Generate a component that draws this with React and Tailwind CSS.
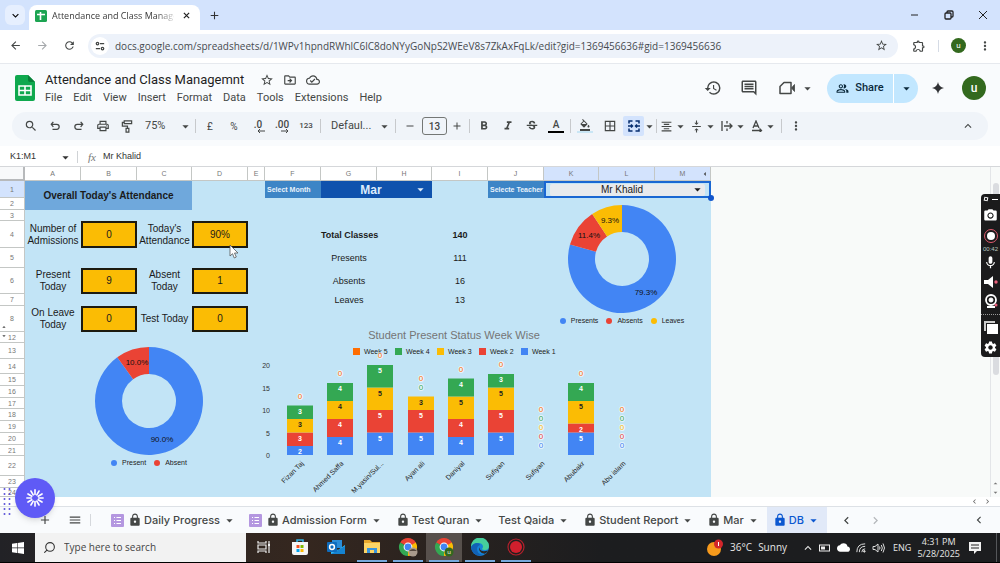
import React from 'react';
import {
  MdAdd, MdArrowBack, MdArrowDropDown, MdArrowDropUp, MdArrowForward, MdArrowLeft, MdBorderAll,
  MdChevronLeft, MdChevronRight, MdCloud, MdExpandLess, MdExpandMore, MdFormatAlignCenter,
  MdFormatBold, MdFormatColorFill, MdFormatItalic, MdHistory, MdLock, MdMenu, MdMic, MdMoreVert,
  MdOutlineCloudDone, MdOutlineComment, MdOutlineDriveFileMove, MdOutlineExtension,
  MdOutlinePeopleAlt, MdOutlinePrint, MdPhotoCamera, MdRefresh, MdRemove, MdSearch, MdSettings,
  MdStarBorder, MdStrikethroughS, MdVerticalAlignCenter,
} from 'react-icons/md';
import { Search } from 'lucide-react';

const BLUE = '#4285f4';
const RED = '#ea4335';
const YELLOW = '#fbbc04';
const GREEN = '#34a853';
const ORANGE = '#ff6d01';

const menus = ['File', 'Edit', 'View', 'Insert', 'Format', 'Data', 'Tools', 'Extensions', 'Help'];

const columns = [
  ['A', 'w-[56px]'], ['B', 'w-[56px]'], ['C', 'w-[55px]'], ['D', 'w-[56px]'], ['E', 'w-[17px]'],
  ['F', 'w-[56px]'], ['G', 'w-[56px]'], ['H', 'w-[55px]'], ['I', 'w-[56px]'], ['J', 'w-[56px]'],
  ['K', 'w-[55px]'], ['L', 'w-[56px]'], ['M', 'w-[56px]'],
];

const label = (text) => ({ text, cls: 'text-[10px] leading-[12px]' });
const box = (text) => ({ text, cls: 'border-2 border-[#1c1a10] bg-[#fbbc04] text-[10px] leading-[12px]' });
const value = (text) => ({ text, cls: 'text-[9px] leading-[12px]' });
const bold = (text) => ({ text, cls: 'whitespace-nowrap text-[9px] leading-[12px] font-bold' });
const gap = (span) => ({ text: '', span, cls: '' });

const rows = [
  { n: 2, h: 'h-[12px]', cells: [gap(10)] },
  { n: 3, h: 'h-[11px]', cells: [gap(13)] },
  {
    n: 4, h: 'h-[27px]',
    cells: [label('Number of Admissions'), box('0'), label("Today's Attendance"), box('90%'), gap(2), bold('Total Classes'), gap(1), bold('140'), gap(4)],
  },
  { n: 5, h: 'h-[20px]', cells: [gap(6), value('Presents'), gap(1), value('111'), gap(4)] },
  {
    n: 6, h: 'h-[26px]',
    cells: [label('Present Today'), box('9'), label('Absent Today'), box('1'), gap(2), value('Absents'), gap(1), value('16'), gap(4)],
  },
  { n: 7, h: 'h-[12px]', cells: [gap(6), value('Leaves'), gap(1), value('13'), gap(4)] },
  { n: 8, h: 'h-[26px]', hidden: 'above', cells: [label('On Leave Today'), box('0'), label('Test Today'), box('0'), gap(9)] },
  { n: 12, h: 'h-[11px]', hidden: 'below', cells: [gap(13)] },
  { n: 13, h: 'h-[16px]', cells: [gap(13)] },
  { n: 14, h: 'h-[15px]', cells: [gap(13)] },
  { n: 15, h: 'h-[12px]', cells: [gap(13)] },
  { n: 16, h: 'h-[12px]', cells: [gap(13)] },
  { n: 17, h: 'h-[11px]', cells: [gap(13)] },
  { n: 18, h: 'h-[12px]', cells: [gap(13)] },
  { n: 19, h: 'h-[12px]', cells: [gap(13)] },
  { n: 20, h: 'h-[12px]', cells: [gap(13)] },
  { n: 21, h: 'h-[11px]', cells: [gap(13)] },
  { n: 22, h: 'h-[20px]', cells: [gap(13)] },
  { n: 23, h: 'h-[12px]', cells: [gap(13)] },
  { n: 24, h: 'h-[9px]', cells: [gap(13)] },
];

const weeks = [
  { name: 'Week 1', color: BLUE, text: '#fff' },
  { name: 'Week 2', color: RED, text: '#fff' },
  { name: 'Week 3', color: YELLOW, text: '#222' },
  { name: 'Week 4', color: GREEN, text: '#fff' },
  { name: 'Week 5', color: ORANGE, text: '#fff' },
];

const students = [
  { name: 'Fizan Taj', v: [2, 3, 3, 3, 0] },
  { name: 'Ahmed Saffa', v: [4, 4, 4, 4, 0] },
  { name: 'M.yasin/Sul...', v: [5, 5, 5, 5, 0] },
  { name: 'Ayan ali', v: [5, 5, 3, 0, 0] },
  { name: 'Daniyal', v: [4, 4, 5, 4, 0] },
  { name: 'Sufiyan', v: [5, 5, 5, 3, 0] },
  { name: 'Sufiyan', v: [0, 0, 0, 0, 0] },
  { name: 'Abubakr', v: [5, 2, 5, 4, 0] },
  { name: 'Abu islam', v: [0, 0, 0, 0, 0] },
];

const sheetTabs = [
  { name: 'Daily Progress', form: true, lock: true },
  { name: 'Admission Form', form: true, lock: true },
  { name: 'Test Quran', lock: true },
  { name: 'Test Qaida' },
  { name: 'Student Report', lock: true },
  { name: 'Mar', lock: true },
  { name: 'DB', lock: true, active: true },
];

function Caret({ className = '' }) {
  return <MdArrowDropDown size={15} className={`shrink-0 ${className}`} />;
}

function Tool({ name, children, className = 'w-6' }) {
  return (
    <button aria-label={name} className={`flex h-5 shrink-0 items-center justify-center ${className}`}>
      {children}
    </button>
  );
}

function Divider() {
  return <span className="mx-0.5 h-3.5 w-px shrink-0 bg-[#c7c9cc]" />;
}

function SheetsLogo({ className }) {
  return (
    <svg viewBox="0 0 20 26" className={className}>
      <path d="M2 0h11l7 7v17a2 2 0 0 1-2 2H2a2 2 0 0 1-2-2V2a2 2 0 0 1 2-2z" fill="#0fa84e" />
      <path d="M13 0l7 7h-5a2 2 0 0 1-2-2z" fill="#087f38" />
      <path d="M4 11h12v9H4zM4 15.500h12M10 11v9" fill="none" stroke="#fff" strokeWidth="1.600" />
    </svg>
  );
}

function TabStrip() {
  return (
    <div className="flex h-[30px] shrink-0 items-end bg-[#d3e3fd] pl-[5px]">
      <button aria-label="Search tabs" className="mb-[5px] flex h-5 w-5 items-center justify-center rounded-md bg-[#e6effe]">
        <MdExpandMore size={13} />
      </button>
      <div className="ml-1 flex h-[25px] w-[171px] items-center rounded-t-lg bg-white px-1.5 pb-1">
        <svg viewBox="0 0 12 12" className="h-3 w-3 shrink-0">
          <rect width="12" height="12" rx="1.500" fill="#1ca452" />
          <path d="M2 4.500h8M5.500 2v8" stroke="#fff" strokeWidth="1.600" />
        </svg>
        <span className="ml-[5px] flex-1 overflow-hidden whitespace-nowrap bg-linear-to-r from-[#333] from-85% to-[#ddd] bg-clip-text font-['Open_Sans'] text-[9px] leading-[14px] text-transparent">
          Attendance and Class Management
        </span>
        <button aria-label="Close tab" className="ml-1 flex w-4 justify-center">
          <svg viewBox="0 0 8 8" className="h-[7px] w-[7px]" stroke="#222" strokeWidth="1.400"><path d="M1 1l6 6M7 1L1 7" /></svg>
        </button>
      </div>
      <button aria-label="New tab" className="mb-2 ml-2 text-[#333]"><MdAdd size={13} /></button>
      <div className="mb-2.5 ml-auto flex text-[#222]">
        <button aria-label="Minimize" className="flex w-[34px] justify-center">
          <svg viewBox="0 0 10 10" className="h-2.5 w-2.5" stroke="currentColor"><path d="M1 5h7" /></svg>
        </button>
        <button aria-label="Restore" className="flex w-[34px] items-center justify-center">
          <svg viewBox="0 0 10 10" className="h-2.5 w-2.5" stroke="currentColor" strokeWidth="1.300" fill="none">
            <rect x="1" y="3" width="6" height="6" rx="1" /><path d="M3 3V2q0-1 1-1h4q1 0 1 1v4q0 1-1 1H7" />
          </svg>
        </button>
        <button aria-label="Close" className="flex w-[34px] items-center justify-center">
          <svg viewBox="0 0 8 8" className="h-2 w-2" stroke="currentColor"><path d="M0 0l8 8M8 0L0 8" /></svg>
        </button>
      </div>
    </div>
  );
}

function AddressBar() {
  return (
    <div className="flex h-[34px] shrink-0 items-center border-b border-[#e6e9ee] bg-white pb-0.5 pl-[9px] pr-2 text-[#444746]">
      <button aria-label="Back"><MdArrowBack size={13} /></button>
      <button aria-label="Forward" className="ml-3.5 text-[#a5a8ab]"><MdArrowForward size={13} /></button>
      <button aria-label="Reload" className="ml-3.5"><MdRefresh size={13} /></button>
      <div className="ml-3 flex h-6 flex-1 items-center rounded-full bg-[#edf2fa] pl-[3px] pr-2.5">
        <button aria-label="Site information" className="flex h-[18px] w-[18px] items-center justify-center rounded-full bg-white">
          <svg viewBox="0 0 12 12" className="h-2.5 w-2.5" fill="none" stroke="currentColor" strokeWidth="1.500">
            <circle cx="3" cy="3" r="1.500" /><path d="M6 3h5M1 9h5" /><circle cx="9" cy="9" r="1.500" />
          </svg>
        </button>
        <input
          aria-label="Address"
          className="ml-1.5 h-5 flex-1 bg-transparent font-['Open_Sans'] text-[10px] text-[#474b50] outline-none"
          defaultValue="docs.google.com/spreadsheets/d/1WPv1hpndRWhlC6lC8doNYyGoNpS2WEeV8s7ZkAxFqLk/edit?gid=1369456636#gid=1369456636"
        />
        <button aria-label="Bookmark"><MdStarBorder size={13} /></button>
      </div>
      <button aria-label="Extensions" className="ml-3.5"><MdOutlineExtension size={14} /></button>
      <span className="mx-3 h-3 w-px bg-[#d5dbe5]" />
      <button aria-label="Profile" className="flex h-[15px] w-[15px] items-center justify-center rounded-full bg-[#33691e] text-[8px] leading-none text-white">u</button>
      <button aria-label="Browser menu" className="ml-3"><MdMoreVert size={14} /></button>
    </div>
  );
}

function DocHeader() {
  return (
    <header className="flex h-12 shrink-0 items-center pl-[15px] pr-[14px] text-[#444746]">
      <SheetsLogo className="h-[26px] w-5 shrink-0" />
      <div className="ml-2.5 flex flex-col pt-0.5">
        <div className="flex items-center">
          <h1 className="whitespace-nowrap text-[13px] leading-[18px] text-[#1f1f1f]">Attendance and Class Managemnt</h1>
          <div className="ml-4 flex gap-[9px]">
            <button aria-label="Star"><MdStarBorder size={14} /></button>
            <button aria-label="Move"><MdOutlineDriveFileMove size={14} /></button>
            <button aria-label="Saved to Drive"><MdOutlineCloudDone size={14} /></button>
          </div>
        </div>
        <nav className="flex gap-[11px] text-[11px] leading-[18px]">
          {menus.map((m) => <button key={m}>{m}</button>)}
        </nav>
      </div>
      <div className="ml-auto flex items-center">
        <button aria-label="Version history"><MdHistory size={18} /></button>
        <button aria-label="Comments" className="ml-[18px]"><MdOutlineComment size={18} /></button>
        <button aria-label="Meet" className="ml-5 flex items-center">
          <svg viewBox="0 0 18 14" className="h-3.5 w-[18px]" fill="none" stroke="currentColor" strokeWidth="1.500">
            <path d="M6 1.500h7v11H2v-7z" strokeLinejoin="round" /><path d="M13.500 7L16.500 3.500v7z" fill="currentColor" strokeWidth="0.800" />
          </svg>
          <Caret className="ml-1" />
        </button>
        <div className="ml-3 flex h-[29px] overflow-hidden rounded-full bg-[#c2e7ff] text-[#0b2a3c]">
          <button className="flex w-[66px] items-center justify-center gap-1.5 text-[11px] font-medium">
            <MdOutlinePeopleAlt size={13} />
            Share
          </button>
          <button aria-label="Share options" className="flex w-[25px] items-center justify-center border-l border-white"><Caret /></button>
        </div>
        <button aria-label="Gemini" className="ml-3.5">
          <svg viewBox="0 0 12 12" className="h-3 w-3"><path d="M6 0q.8 5.200 6 6-5.200.8-6 6-.8-5.200-6-6 5.200-.8 6-6z" fill="#303134" /></svg>
        </button>
        <button aria-label="Account" className="ml-[18px] flex h-6 w-6 items-center justify-center rounded-full bg-[#33691e] text-[12px] font-medium leading-none text-white">u</button>
      </div>
    </header>
  );
}

function Toolbar() {
  return (
    <div className="mx-3 mb-1.5 flex h-7 shrink-0 items-center rounded-full bg-[#f0f4f9] pl-[7px] pr-2.5 text-[#444746]">
      <Tool name="Search menus"><MdSearch size={14} /></Tool>
      <Tool name="Undo">
        <svg viewBox="0 0 12 12" className="h-2.5 w-2.5" fill="none" stroke="currentColor" strokeWidth="1.500"><path d="M4 1L1.500 4 4 7M2 4h6q3 0 3 3t-3 3H3" /></svg>
      </Tool>
      <Tool name="Redo">
        <svg viewBox="0 0 12 12" className="h-2.5 w-2.5" fill="none" stroke="currentColor" strokeWidth="1.500"><path d="M8 1l2.500 3L8 7M10 4H4q-3 0-3 3t3 3h5" /></svg>
      </Tool>
      <Tool name="Print"><MdOutlinePrint size={14} /></Tool>
      <Tool name="Paint format">
        <svg viewBox="0 0 12 14" className="h-[13px] w-3" fill="none" stroke="currentColor" strokeWidth="1.300">
          <path d="M3 1h8v3H3zM3 2.500H1V6.500h5.500V9M5 9h3v4H5z" />
        </svg>
      </Tool>
      <div className="flex w-[54px] items-center">
        <select aria-label="Zoom" className="w-[39px] appearance-none bg-transparent pl-1.5 text-[11px] outline-none"><option>75%</option></select>
        <Caret className="pointer-events-none" />
      </div>
      <Divider />
      <Tool name="Currency"><span className="text-[10px]">£</span></Tool>
      <Tool name="Percent"><span className="text-[10px]">%</span></Tool>
      <Tool name="Decrease decimal places">
        <span className="flex flex-col items-center text-[10px] font-medium leading-[9px]">.0
          <svg viewBox="0 0 8 4" className="ml-1.5 h-1 w-2" fill="none" stroke="currentColor"><path d="M8 2H1M3 0L1 2l2 2" /></svg>
        </span>
      </Tool>
      <Tool name="Increase decimal places">
        <span className="flex flex-col items-center text-[10px] font-medium leading-[9px]">.00
          <svg viewBox="0 0 8 4" className="ml-1.5 h-1 w-2" fill="none" stroke="currentColor"><path d="M0 2h7M5 0l2 2-2 2" /></svg>
        </span>
      </Tool>
      <Tool name="More formats"><span className="text-[8px] font-medium">123</span></Tool>
      <Divider />
      <div className="flex w-[70px] items-center">
        <select aria-label="Font" className="w-[54px] appearance-none bg-transparent pl-2 text-[11px] outline-none"><option>Defaul...</option></select>
        <Caret className="pointer-events-none" />
      </div>
      <Divider />
      <Tool name="Decrease font size"><MdRemove size={12} /></Tool>
      <input aria-label="Font size" defaultValue="13" className="h-[18px] w-[25px] rounded-[3px] border border-[#747775] bg-transparent text-center text-[10px] font-medium outline-none" />
      <Tool name="Increase font size" className="w-5"><MdAdd size={12} /></Tool>
      <Divider />
      <Tool name="Bold"><MdFormatBold size={14} /></Tool>
      <Tool name="Italic"><MdFormatItalic size={14} /></Tool>
      <Tool name="Strikethrough"><MdStrikethroughS size={14} /></Tool>
      <Tool name="Text color"><span className="w-4 border-b-2 border-black text-[10px] font-medium leading-[12px]">A</span></Tool>
      <Divider />
      <Tool name="Fill color"><span className="border-b-2 border-[#c9e6f5] px-0.5"><MdFormatColorFill size={12} /></span></Tool>
      <Tool name="Borders" className="w-[26px]"><MdBorderAll size={14} /></Tool>
      <Tool name="Merge cells" className="w-[21px] rounded-xs bg-[#d3e3fd] text-[#062e6f]">
        <svg viewBox="0 0 12 12" className="h-3 w-3" fill="none" stroke="currentColor" strokeWidth="1.500">
          <path d="M4.500 1H1v2.500M7.500 1H11v2.500M4.500 11H1V8.500M7.500 11H11V8.500M0 6h4.500M12 6H7.500M3 4.500L4.500 6 3 7.500M9 4.500L7.500 6 9 7.500" />
        </svg>
      </Tool>
      <Tool name="Merge options" className="w-2.5"><Caret /></Tool>
      <Divider />
      <Tool name="Horizontal align" className="w-[30px]"><MdFormatAlignCenter size={13} /><Caret /></Tool>
      <Tool name="Vertical align" className="w-[30px]"><MdVerticalAlignCenter size={13} /><Caret /></Tool>
      <Tool name="Text wrapping" className="w-[30px]">
        <svg viewBox="0 0 12 12" className="h-3 w-3" fill="none" stroke="currentColor" strokeWidth="1.300"><path d="M1 1v10M6 1v2.500M6 8.500V11M3 6h8M8.500 3.500L11 6 8.500 8.500" /></svg>
        <Caret />
      </Tool>
      <Tool name="Text rotation" className="w-[30px]">
        <svg viewBox="0 0 12 12" className="h-3 w-3" fill="none" stroke="currentColor" strokeWidth="1.300"><path d="M2 8L5 1l3 7M3 6h4M1 10.500h9M8.500 8.500l2 2-2 2" /></svg>
        <Caret />
      </Tool>
      <Divider />
      <Tool name="More"><MdMoreVert size={14} /></Tool>
      <Tool name="Hide menus" className="ml-auto w-5"><MdExpandLess size={14} /></Tool>
    </div>
  );
}

function FormulaBar() {
  return (
    <div className="flex h-[21px] shrink-0 items-center border-b border-[#d5d7da] bg-white pl-2.5 pt-0.5 font-['Liberation_Sans',sans-serif] text-[9px] text-[#333]">
      <input aria-label="Name box" defaultValue="K1:M1" className="w-12 bg-transparent outline-none" />
      <Caret />
      <span className="mx-1 h-3 w-px bg-[#d0d3d6]" />
      <span className="ml-1.5 w-[15px] font-['Liberation_Serif',serif] text-[11px] italic leading-none text-[#777]">fx</span>
      <input aria-label="Formula" defaultValue="Mr Khalid" className="flex-1 bg-transparent outline-none" />
    </div>
  );
}

function point(r, turn) {
  const a = turn * 2 * Math.PI;
  return `${(55 + r * Math.sin(a)).toFixed(2)} ${(55 - r * Math.cos(a)).toFixed(2)}`;
}

function slicePath(from, to) {
  const large = to - from > 0.5 ? 1 : 0;
  return `M${point(54, from)}A54 54 0 ${large} 1 ${point(54, to)}L${point(27, to)}A27 27 0 ${large} 0 ${point(27, from)}Z`;
}

function Donut({ slices, className }) {
  let start = 0;
  return (
    <figure className={`absolute flex flex-col items-center ${className}`}>
      <svg viewBox="0 0 110 110" className="h-[110px] w-[110px]">
        {slices.map((s) => {
          const from = start;
          start += s.share;
          return <path key={s.name} d={slicePath(from, start)} fill={s.color} />;
        })}
        {slices.map((s) => (
          <text key={s.name} x={s.x} y={s.y} textAnchor="middle" fontSize="8" fill="#111">{(s.share * 100).toFixed(1)}%</text>
        ))}
      </svg>
      <figcaption className="mt-0.5 flex gap-2 text-[7px] leading-[10px] text-[#222]">
        {slices.map((s) => (
          <span key={s.name} className="flex items-center gap-[5px]">
            <i className="h-1.5 w-1.5 rounded-full" style={{ background: s.color }} />
            {s.name}
          </span>
        ))}
      </figcaption>
    </figure>
  );
}

function WeekChart() {
  const base = 127;
  const unit = 4.5;
  return (
    <svg viewBox="0 0 400 170" className="absolute left-[250px] top-[161px] h-[170px] w-[400px]">
      <text x="204" y="11" textAnchor="middle" fontSize="11" fill="#757575">Student Present Status Week Wise</text>
      {[...weeks].reverse().map((w, i) => (
        <g key={w.name}>
          <rect x={103 + i * 42} y="20" width="7" height="7" fill={w.color} />
          <text x={114 + i * 42} y="26" fontSize="7" fill="#222">{w.name}</text>
        </g>
      ))}
      {[0, 5, 10, 15, 20].map((t) => (
        <text key={t} x="20" y={base + 3 - t * unit} textAnchor="end" fontSize="7" fill="#333">{t}</text>
      ))}
      {students.map((s, i) => {
        const cx = 50 + Math.round(i * 40.2);
        let total = 0;
        let zeros = 0;
        return (
          <g key={i}>
            {s.v.map((v, k) => {
              total += v;
              const top = base - total * unit;
              if (v === 0) {
                const y = top - 7 - 9 * zeros++;
                return (
                  <text key={k} x={cx} y={y} textAnchor="middle" fontSize="8" fill={weeks[k].color} stroke="#fff" strokeWidth="2" strokeOpacity="0.6" paintOrder="stroke">0</text>
                );
              }
              return (
                <g key={k}>
                  <rect x={cx - 13} y={top} width="26" height={v * unit} fill={weeks[k].color} />
                  <text x={cx} y={top + 8} textAnchor="middle" fontSize="7" fontWeight="bold" fill={weeks[k].text}>{v}</text>
                </g>
              );
            })}
            <text transform={`translate(${cx + 4} ${base + 9}) rotate(-45)`} textAnchor="end" fontSize="7" fill="#222">{s.name}</text>
          </g>
        );
      })}
    </svg>
  );
}

function SheetTable() {
  const head = 'relative border-b border-r border-[#c4c7c5] p-0 text-[7px] leading-none font-normal text-[#777]';
  return (
    <table className="w-[711px] shrink-0 table-fixed border-separate border-spacing-0 text-center text-[#1b1b1b]">
      <thead>
        <tr className="h-[14px]">
          <th className="w-[25px] border-b-2 border-r-2 border-[#b7b9bb] bg-[#f8f9fa] p-0" />
          {columns.map(([c, w]) => (
            <th key={c} className={`${head} ${w} ${'KLM'.includes(c) ? 'bg-[#d3e3fd] text-[#333]' : 'bg-white'}`}>
              {c}
              {c === 'M' && <MdArrowLeft size={10} className="absolute right-0 top-0.5 text-[#444]" />}
            </th>
          ))}
        </tr>
      </thead>
      <tbody className="bg-[#c2e4f6]">
        <tr className="h-[17px]">
          <th className={`${head} bg-[#d3e3fd] text-[#333]`}>1</th>
          <td colSpan={3} rowSpan={2} className="bg-[#6fa8dc] p-0 text-[10px] font-bold">Overall Today's Attendance</td>
          <td colSpan={2} className="p-0" />
          <td className="whitespace-nowrap bg-[#3d85c6] p-0 pl-0.5 text-left text-[7px] font-bold leading-none text-[#e8f2fb]">
            <label htmlFor="month">Select Month</label>
          </td>
          <td colSpan={2} className="bg-[#0f52ad] p-0">
            <div className="flex items-center text-[#dcebfb]">
              <select id="month" className="h-[17px] flex-1 appearance-none pl-2 text-center text-[12px] font-bold leading-[16px] outline-none"><option>Mar</option></select>
              <Caret className="mr-1" />
            </div>
          </td>
          <td className="p-0" />
          <td className="whitespace-nowrap bg-[#3d85c6] p-0 pl-0.5 text-left text-[7px] font-bold leading-none text-[#e8f2fb]">
            <label htmlFor="teacher">Selecte Teacher</label>
          </td>
          <td colSpan={3} className="relative bg-[#c2e4f6] p-0">
            <div className="flex h-[17px] items-center border-2 border-[#1967d2] px-1">
              <div className="flex h-3 flex-1 items-center rounded-xs bg-[#e8eaed]">
                <select id="teacher" className="h-3 flex-1 appearance-none pl-1 text-center text-[10px] leading-[12px] outline-none"><option>Mr Khalid</option></select>
                <Caret />
              </div>
            </div>
            <span className="absolute -bottom-[3px] -right-[3px] h-1.5 w-1.5 rounded-full bg-[#1155cc]" />
          </td>
        </tr>
        {rows.map((r) => (
          <tr key={r.n} className={r.h}>
            <th className={`${head} bg-white`}>
              {r.n}
              {r.hidden === 'above' && <MdArrowDropUp size={8} className="absolute bottom-0 left-0 text-[#444]" />}
              {r.hidden === 'below' && <MdArrowDropDown size={8} className="absolute left-0 top-0 text-[#444]" />}
            </th>
            {r.cells.map((c, i) => <td key={i} colSpan={c.span} className={`p-0 ${c.cls}`}>{c.text}</td>)}
          </tr>
        ))}
      </tbody>
    </table>
  );
}

function Recorder() {
  return (
    <aside className="absolute right-0 top-[27px] flex w-[19px] flex-col items-center gap-1.5 rounded-l-sm bg-[#1b1b1c] py-0.5 text-white">
      <span className="flex h-1.5 items-center gap-1"><i className="h-1 w-1 rotate-12 border border-white" /><i className="h-px w-1.5 bg-white" /></span>
      <button aria-label="Screenshot"><MdPhotoCamera size={15} /></button>
      <button aria-label="Record" className="h-3.5 w-3.5 rounded-full border border-[#e05a6d] p-0.5"><i className="block h-full rounded-full bg-white" /></button>
      <span className="-my-1 text-[6px] leading-[8px] text-[#b9c9c0]">00:42</span>
      <button aria-label="Microphone"><MdMic size={15} /></button>
      <button aria-label="Speaker">
        <svg viewBox="0 0 14 12" className="h-3 w-3.5" fill="#fff"><path d="M0 4h4l5-4v12L4 8H0z" /><circle cx="12" cy="6" r="1.700" fill="#e8607a" /></svg>
      </button>
      <button aria-label="Webcam">
        <svg viewBox="0 0 14 14" className="h-3.5 w-3.5" fill="none" stroke="#fff"><circle cx="7" cy="6" r="5" strokeWidth="1.800" /><circle cx="7" cy="6" r="2" fill="#fff" /><path d="M3 13h8" strokeWidth="2" /><circle cx="12" cy="11" r="1.500" fill="#e8607a" stroke="none" /></svg>
      </button>
      <span className="w-full border-t border-dotted border-[#999]" />
      <button aria-label="Whiteboard">
        <svg viewBox="0 0 14 13" className="h-[13px] w-3.5"><path d="M0 0h11v2H2v8H0z" fill="#ccc" /><path d="M3 3h11v10H3z" fill="#fff" /></svg>
      </button>
      <button aria-label="Settings"><MdSettings size={15} /></button>
    </aside>
  );
}

function Sheet() {
  return (
    <main className="relative flex min-h-0 flex-1 items-start overflow-hidden bg-[#f8faf9] font-['Liberation_Sans',Arial,sans-serif]">
      <SheetTable />
      <div className="ml-auto flex h-full w-2.5 flex-col items-center border-l border-[#e3e5e8] pt-4 text-[#777]">
        <div className="mb-auto h-48 w-1.5 rounded-full bg-[#dadce0]" />
        <MdArrowDropUp size={9} />
        <MdArrowDropDown size={9} />
      </div>
      <Donut
        className="left-[546px] top-[37px] w-[152px]"
        slices={[
          { name: 'Presents', share: 0.793, color: BLUE, x: 79, y: 91 },
          { name: 'Absents', share: 0.114, color: RED, x: 22, y: 34 },
          { name: 'Leaves', share: 0.093, color: YELLOW, x: 43, y: 19 },
        ]}
      />
      <Donut
        className="left-[73px] top-[179px] w-[152px]"
        slices={[
          { name: 'Present', share: 0.9, color: BLUE, x: 68, y: 96 },
          { name: 'Absent', share: 0.1, color: RED, x: 43, y: 19 },
        ]}
      />
      <WeekChart />
      <svg viewBox="0 0 10 15" className="absolute left-[229px] top-[77px] h-[15px] w-2.5">
        <path d="M1 1v11l2.500-2.300L5.300 14l2-1-1.800-4H9z" fill="#fff" stroke="#555" strokeWidth="0.800" />
      </svg>
      <Recorder />
    </main>
  );
}

function SheetTabs() {
  return (
    <div className="relative shrink-0">
      <div className="flex h-2.5 items-center justify-end border-b border-[#dde1e6] bg-white pr-2 text-[#666]">
        <MdChevronLeft size={9} /><MdChevronRight size={9} className="ml-1" />
      </div>
      <div className="flex h-[26px] items-center bg-[#f9fbfd] pl-[38px] pr-3.5 font-[Inter,sans-serif] text-[11px] font-medium text-[#444746]">
        <button aria-label="Add sheet"><MdAdd size={14} /></button>
        <button aria-label="All sheets" className="ml-4"><MdMenu size={14} /></button>
        <span className="ml-2 mr-3.5 h-3 w-px bg-[#d5d8dc]" />
        {sheetTabs.map((t) => (
          <button key={t.name} className={`flex h-full items-center whitespace-nowrap ${t.active ? 'bg-[#e1e9f8] px-1.5 text-[#0b57d0]' : 'px-1.5'}`}>
            {t.form && (
              <svg viewBox="0 0 13 13" className="mr-1 h-[13px] w-[13px]">
                <rect width="13" height="13" rx="1" fill="#b497e0" />
                <path d="M3 3.500h1M3 6.500h1M3 9.500h1M5.500 3.500H10M5.500 6.500H10M5.500 9.500H10" stroke="#fff" strokeWidth="1.200" />
              </svg>
            )}
            {t.lock && <MdLock size={14} className="mr-0.5" />}
            {t.name}
            <Caret className="ml-0.5" />
          </button>
        ))}
        <button aria-label="Scroll left" className="ml-3"><MdChevronLeft size={15} /></button>
        <button aria-label="Scroll right" className="ml-3.5 text-[#b5b8bb]"><MdChevronRight size={15} /></button>
        <button aria-label="Side panel" className="ml-auto"><MdChevronLeft size={14} /></button>
      </div>
      <svg viewBox="0 0 12 28" className="absolute bottom-[18px] left-[3px] h-7 w-3" fill="#5b52d8">
        {[0, 1, 2, 3, 4, 5].map((r) => (
          <g key={r}><circle cx="1.500" cy={2 + r * 5} r="1" /><circle cx="6.500" cy={2 + r * 5} r="1" /></g>
        ))}
      </svg>
      <button aria-label="Assistant" className="absolute bottom-[15px] left-[15px] flex h-10 w-10 items-center justify-center rounded-full bg-[#5f5af6] shadow-md">
        <svg viewBox="0 0 20 20" className="h-[18px] w-[18px]" stroke="#fff" strokeWidth="1.800" strokeLinecap="round">
          {[0, 30, 60, 90, 120, 150, 180, 210, 240, 270, 300, 330].map((a) => (
            <path key={a} d="M10 1v5" transform={`rotate(${a} 10 10)`} />
          ))}
        </svg>
      </button>
    </div>
  );
}

function ChromeLogo({ badge }) {
  return (
    <svg viewBox="0 0 20 20" className="h-5 w-5">
      <path d="M10 10L2.200 5.500A9 9 0 0 1 17.800 5.500L18 6z" fill="#ea4335" />
      <path d="M10 10l7.800-4.500A9 9 0 0 1 10 19z" fill="#fbbc04" />
      <path d="M10 10v9A9 9 0 0 1 2.200 5.500z" fill="#34a853" />
      <circle cx="10" cy="10" r="4.400" fill="#fff" />
      <circle cx="10" cy="10" r="3.400" fill="#4285f4" />
      <circle cx="15" cy="15" r="4.500" fill={badge ? '#33691e' : '#a89a8c'} />
      {badge ? <text x="15" y="17" textAnchor="middle" fontSize="6" fill="#fff">{badge}</text> : <path d="M11 14q4-4 8 0z" fill="#54483e" />}
    </svg>
  );
}

const apps = [
  {
    name: 'Task view',
    icon: <svg viewBox="0 0 14 14" className="h-3.5 w-3.5" fill="none" stroke="#eee" strokeWidth="1.200"><path d="M1 1v2h8V1M1 13v-2h8v2M1 5h8v4H1zM12 1v12" /><path d="M11 5h2" strokeWidth="2" /></svg>,
  },
  {
    name: 'Microsoft Store',
    icon: (
      <svg viewBox="0 0 18 18" className="h-[18px] w-[18px]">
        <path d="M6 5V2h6v3" fill="none" stroke="#31b5e8" strokeWidth="1.500" /><path d="M1 4h16v11q0 2-2 2H3q-2 0-2-2z" fill="#f5f5f5" />
        <path d="M5.500 7h3v3h-3z" fill="#f25022" /><path d="M9.500 7h3v3h-3z" fill="#7fba00" /><path d="M5.500 11h3v3h-3z" fill="#00a4ef" /><path d="M9.500 11h3v3h-3z" fill="#ffb900" />
      </svg>
    ),
  },
  {
    name: 'Outlook',
    icon: (
      <svg viewBox="0 0 18 18" className="h-[18px] w-[18px]">
        <path d="M5 2h10v8H5z" fill="#2a8dd8" /><path d="M4 7l7 5 7-5v9H4z" fill="#35b8f1" /><path d="M4 16l14-8v8z" fill="#1583d0" />
        <rect y="4" width="10" height="10" rx="1" fill="#0f6cbd" /><circle cx="5" cy="9" r="2.400" fill="none" stroke="#fff" strokeWidth="1.500" />
      </svg>
    ),
  },
  {
    name: 'File Explorer', open: true,
    icon: (
      <svg viewBox="0 0 18 16" className="h-4 w-[18px]">
        <path d="M1 1h6l2 2h8v5H1z" fill="#e8a92d" /><path d="M1 4h16v10H1z" fill="#fcd566" /><path d="M4 14V9h10v5h-3v-3H7v3z" fill="#3a95dc" />
      </svg>
    ),
  },
  { name: 'Chrome', open: true, icon: <ChromeLogo /> },
  { name: 'Chrome work profile', open: true, active: true, icon: <ChromeLogo badge="u" /> },
  {
    name: 'Edge', open: true,
    icon: (
      <svg viewBox="0 0 18 18" className="h-[18px] w-[18px]">
        <circle cx="9" cy="9" r="9" fill="#1583d8" />
        <path d="M0 9A9 9 0 0 1 18 8q0 4-4 4-3 0-3-1 1-1 1-3Q11 5 7.500 5 3 5 0 9z" fill="#46cf9c" />
        <path d="M0 9q2-4 6-4Q9 5 9 7 6 8 6 11q0 5 6 6Q2 20 0 9z" fill="#1261b5" />
        <path d="M9 7.500q-1 1.500 0 4 2 3 8 1-1 2-3 3.200-8-.7-5-8.200z" fill="#2c2622" />
      </svg>
    ),
  },
  {
    name: 'Recorder', open: true,
    icon: <svg viewBox="0 0 18 18" className="h-[18px] w-[18px]"><circle cx="9" cy="9" r="8" fill="none" stroke="#b5202c" strokeWidth="1.200" /><circle cx="9" cy="9" r="6" fill="#d11f2d" /></svg>,
  },
];

function Taskbar() {
  return (
    <footer className="flex h-[30px] shrink-0 border-b border-black bg-linear-to-r from-[#222226] via-[#35271f] via-30% to-[#1c1d1f] to-60% font-['Open_Sans',sans-serif] text-[9px] text-[#e6e6e6]">
      <button aria-label="Start" className="flex w-[35px] items-center justify-center">
        <svg viewBox="0 0 12 12" className="h-3 w-3" fill="#fff"><path d="M0 1.700l5-.7v4.600H0zM5.600.9L12 0v5.600H5.600zM0 6.300h5V11l-5-.7zM5.600 6.300H12V12l-6.400-.9z" /></svg>
      </button>
      <label className="flex w-[211px] items-center bg-[#f2f2f2] pl-2 text-[#333]">
        <Search size={13} className="-scale-x-100" />
        <input aria-label="Search" placeholder="Type here to search" className="ml-2 w-40 bg-transparent text-[10px] outline-none placeholder:text-[#444]" />
      </label>
      <nav className="flex">
        {apps.map((a) => (
          <button key={a.name} aria-label={a.name} className={`flex w-9 flex-col items-center justify-between ${a.active ? 'bg-[#57504c]' : ''}`}>
            <span className="flex flex-1 items-center">{a.icon}</span>
            <i className={`h-0.5 w-[30px] ${a.open ? 'bg-[#76a9dc]' : ''}`} />
          </button>
        ))}
      </nav>
      <div className="ml-auto flex items-center">
        <svg viewBox="0 0 18 18" className="h-[18px] w-[18px]">
          <circle cx="8" cy="10" r="7" fill="#f79a1c" /><circle cx="12.500" cy="5" r="4.500" fill="#d2262b" /><path d="M12.500 3v4" stroke="#fff" />
        </svg>
        <span className="ml-1.5 text-[10px]">36°C</span>
        <span className="ml-1.5 text-[10px]">Sunny</span>
        <button aria-label="Hidden icons" className="ml-3.5"><MdExpandLess size={14} /></button>
        <svg viewBox="0 0 12 8" className="ml-1 h-2 w-3" fill="none" stroke="#eee"><rect x="0.500" y="1" width="10" height="6" /><path d="M2 4h4" strokeWidth="3" /></svg>
        <MdCloud size={13} className="ml-1.5 text-white" />
        <svg viewBox="0 0 12 12" className="ml-1.5 h-2.5 w-2.5" fill="none" stroke="#ddd" strokeWidth="1.200">
          <path d="M1 11Q1 1 11 1M4 11q0-7 7-7M7 11q0-4 4-4" /><circle cx="10" cy="10" r="1" fill="#ddd" />
        </svg>
        <svg viewBox="0 0 13 12" className="ml-1.5 h-3 w-[13px]" fill="none" stroke="#ddd">
          <path d="M1 4.500h2L6 2v8L3 7.500H1zM7.500 4.500q1 1.500 0 3M9.300 3q2 3 0 6M11 1.500q3 4.500 0 9" />
        </svg>
        <span className="ml-2">ENG</span>
        <div className="ml-1.5 flex flex-col items-center leading-[12px]">
          <span>4:31 PM</span>
          <span>5/28/2025</span>
        </div>
        <button aria-label="Notifications" className="ml-2">
          <svg viewBox="0 0 14 14" className="h-3.5 w-3.5"><path d="M1 1h12v9H9l-3 3v-3H1z" fill="#f2f2f2" /><path d="M3 4h8M3 7h8" stroke="#222" /></svg>
        </button>
        <span className="ml-3.5 mr-[3px] w-px self-stretch bg-[#55575a]" />
      </div>
    </footer>
  );
}

export default function App() {
  return (
    <div className="flex h-screen flex-col overflow-hidden bg-[#f9fbfd] font-[Roboto,sans-serif]">
      <TabStrip />
      <AddressBar />
      <DocHeader />
      <Toolbar />
      <FormulaBar />
      <Sheet />
      <SheetTabs />
      <Taskbar />
    </div>
  );
}
